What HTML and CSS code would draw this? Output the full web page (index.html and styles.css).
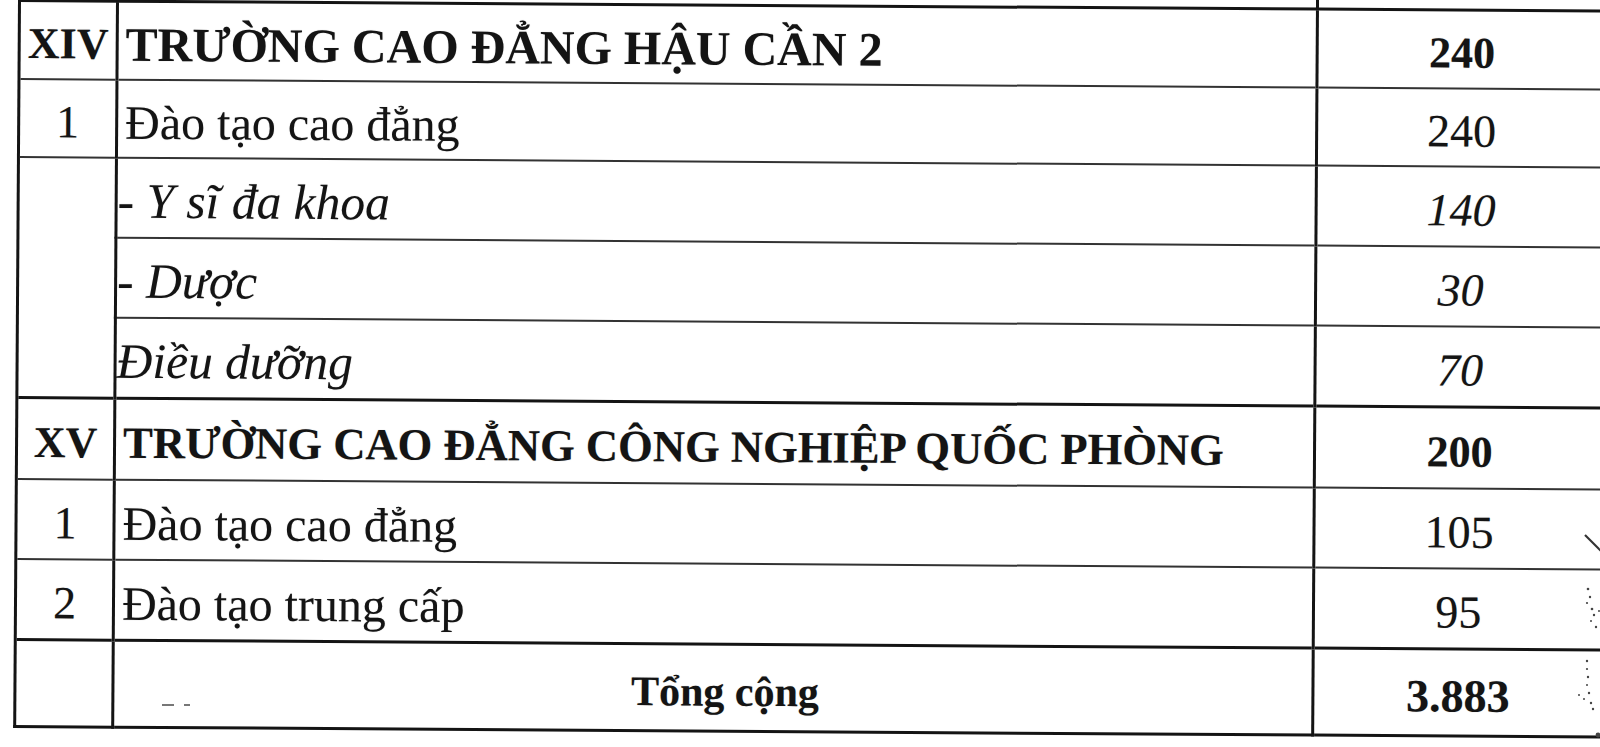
FILE: index.html
```html
<!DOCTYPE html>
<html lang="vi">
<head>
<meta charset="utf-8">
<title>Bảng chỉ tiêu</title>
<link rel="stylesheet" href="styles.css">
</head>
<body>
<div class="page">
  <table class="sheet">
    <colgroup>
      <col class="c-stt">
      <col class="c-name">
      <col class="c-num">
    </colgroup>
    <tr class="stub"><td></td><td></td><td></td></tr>
    <tr class="row h79 thick-top">
      <td class="stt bold">XIV</td>
      <td class="name bold title-a">TRƯỜNG CAO ĐẲNG HẬU CẦN 2</td>
      <td class="num bold">240</td>
    </tr>
    <tr class="row h79">
      <td class="stt">1</td>
      <td class="name">Đào tạo cao đẳng</td>
      <td class="num">240</td>
    </tr>
    <tr class="row h80">
      <td class="stt merged" rowspan="3"></td>
      <td class="name it">- Y sĩ đa khoa</td>
      <td class="num it">140</td>
    </tr>
    <tr class="row h80">
      <td class="name it">- Dược</td>
      <td class="num it">30</td>
    </tr>
    <tr class="row h80">
      <td class="name it">Điều dưỡng</td>
      <td class="num it">70</td>
    </tr>
    <tr class="row h81 thick-top">
      <td class="stt bold">XV</td>
      <td class="name bold title-b">TRƯỜNG CAO ĐẲNG CÔNG NGHIỆP QUỐC PHÒNG</td>
      <td class="num bold">200</td>
    </tr>
    <tr class="row h80">
      <td class="stt">1</td>
      <td class="name">Đào tạo cao đẳng</td>
      <td class="num">105</td>
    </tr>
    <tr class="row h80">
      <td class="stt">2</td>
      <td class="name">Đào tạo trung cấp</td>
      <td class="num">95</td>
    </tr>
    <tr class="row h87 thick-top total">
      <td class="stt"></td>
      <td class="name bold center sum-label">Tổng cộng</td>
      <td class="num bold sum-value">3.883</td>
    </tr>
  </table>
</div>
<svg class="specks" width="50" height="10" viewBox="0 0 50 10" aria-hidden="true">
  <path d="M2 5 H14 M24 5 H30" stroke="#777" stroke-width="2" fill="none"/>
</svg>
<svg class="stamp" width="20" height="232" viewBox="0 0 20 232" aria-hidden="true">
  <path d="M2 20 L18 36" stroke="#333" stroke-width="2.2" fill="none"/>
  <g fill="#444">
    <circle cx="5" cy="74" r="1.3"/><circle cx="7" cy="82" r="1.2"/><circle cx="4" cy="88" r="1.1"/>
    <circle cx="9" cy="94" r="1.3"/><circle cx="11" cy="100" r="1.2"/><circle cx="8" cy="106" r="1"/>
    <circle cx="13" cy="112" r="1.2"/><circle cx="16" cy="96" r="1"/>
    <circle cx="4" cy="146" r="1.2"/><circle cx="4" cy="154" r="1.1"/><circle cx="5" cy="162" r="1.2"/>
    <circle cx="4" cy="170" r="1"/><circle cx="6" cy="178" r="1.2"/><circle cx="-4" cy="180" r="1"/>
    <circle cx="1" cy="184" r="1"/><circle cx="8" cy="188" r="1.2"/><circle cx="10" cy="194" r="1.2"/>
    <circle cx="15" cy="220" r="2.4"/>
  </g>
</svg>
</body>
</html>
```
FILE: styles.css
```css
html, body {
  margin: 0;
  padding: 0;
  background: #ffffff;
}

body {
  width: 1600px;
  height: 747px;
  overflow: hidden;
  position: relative;
}

.page {
  padding-left: 18px;
  margin-top: -10px;
  transform: rotate(0.38deg);
  transform-origin: 19px 10px;
}

.sheet {
  border-collapse: collapse;
  table-layout: fixed;
  width: 1590px;
  font-family: "Liberation Serif", "Times New Roman", serif;
  color: #141414;
  text-shadow: 0 0 1px rgba(0, 0, 0, 0.3);
}

.c-stt { width: 98px; }
.c-name { width: 1200px; }
.c-num { width: 292px; }

.sheet td {
  padding: 8px 0 0 0;
  border-left: 3px solid #141414;
  border-right: 3px solid #141414;
  border-bottom: 2px solid #333333;
  vertical-align: middle;
  white-space: nowrap;
  font-size: 46px;
  line-height: 1;
}

.stub td {
  padding: 0;
  height: 9px;
  border-bottom: 3px solid #141414;
}

.thick-top td {
  border-top: 3px solid #141414;
}

.total td {
  border-bottom: 3px solid #141414;
}

.h79 td { height: 68px; }
.h80 td { height: 70px; }
.h81 td { height: 71px; }
.h87 td { height: 76px; }

.stt {
  text-align: center;
}

.name {
  padding-left: 7px !important;
  text-align: left;
  font-size: 48px !important;
}

.num {
  text-align: center;
  padding-right: 2px !important;
}

.bold {
  font-weight: 700;
  font-size: 44px !important;
}

.name.it {
  font-size: 49.5px !important;
  padding-left: 0 !important;
}

.it {
  font-style: italic;
}

.title-a {
  font-size: 48px !important;
}

.title-b {
  font-size: 44.6px !important;
}

.center {
  text-align: center;
  padding-left: 24px !important;
}

.sum-label {
  font-size: 42px !important;
}

.sum-value {
  font-size: 46px !important;
}

.specks {
  position: absolute;
  left: 160px;
  top: 700px;
}

.stamp {
  position: absolute;
  left: 1583px;
  top: 515px;
  overflow: visible;
}
```
